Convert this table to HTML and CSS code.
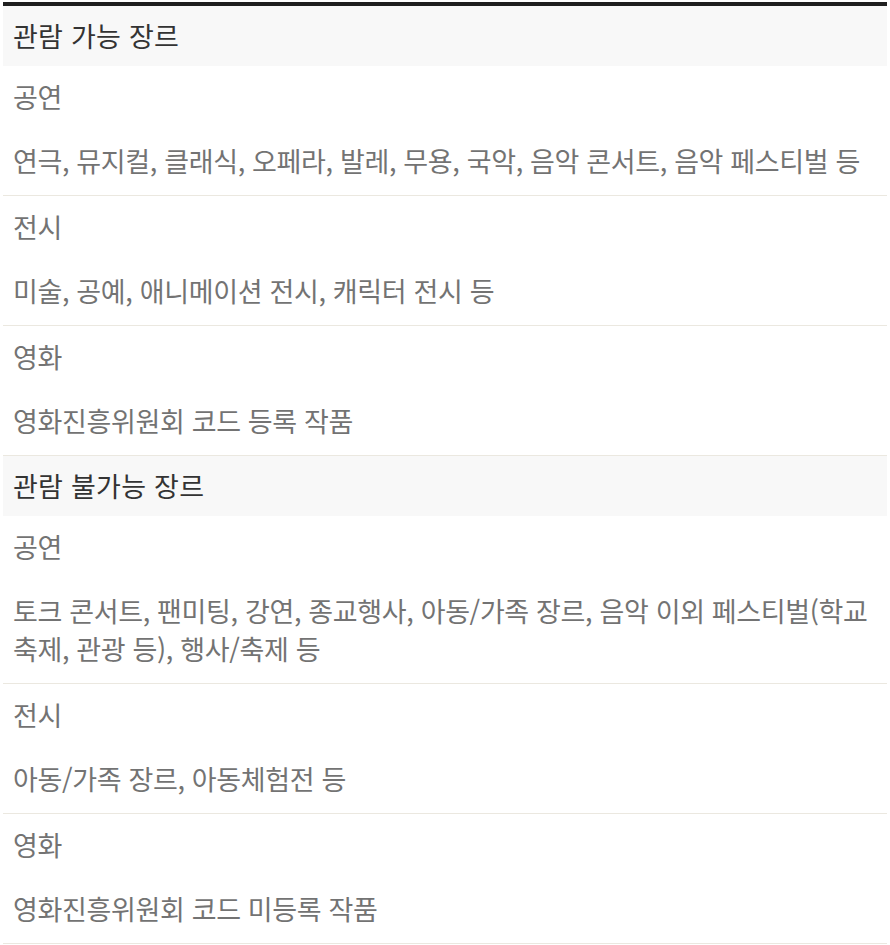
FILE: index.html
```html
<!DOCTYPE html>
<html lang="ko">
<head>
<meta charset="utf-8">
<title>관람 장르</title>
<link rel="stylesheet" href="styles.css">
</head>
<body>
<div class="genre">
  <section class="group">
    <h3 class="group-title">관람 가능 장르</h3>
    <div class="item">
      <p class="item-title">공연</p>
      <p class="item-desc">연극, 뮤지컬, 클래식, 오페라, 발레, 무용, 국악, 음악 콘서트, 음악 페스티벌 등</p>
    </div>
    <div class="item">
      <p class="item-title">전시</p>
      <p class="item-desc">미술, 공예, 애니메이션 전시, 캐릭터 전시 등</p>
    </div>
    <div class="item">
      <p class="item-title">영화</p>
      <p class="item-desc">영화진흥위원회 코드 등록 작품</p>
    </div>
  </section>
  <section class="group">
    <h3 class="group-title">관람 불가능 장르</h3>
    <div class="item">
      <p class="item-title">공연</p>
      <p class="item-desc">토크 콘서트, 팬미팅, 강연, 종교행사, 아동/가족 장르, 음악 이외 페스티벌(학교 축제, 관광 등), 행사/축제 등</p>
    </div>
    <div class="item">
      <p class="item-title">전시</p>
      <p class="item-desc">아동/가족 장르, 아동체험전 등</p>
    </div>
    <div class="item">
      <p class="item-title">영화</p>
      <p class="item-desc">영화진흥위원회 코드 미등록 작품</p>
    </div>
  </section>
</div>
</body>
</html>
```

FILE: styles.css
```css
html, body {
  margin: 0;
  padding: 0;
  background: #ffffff;
}

body {
  font-family: "Noto Sans CJK KR", "Noto Sans", sans-serif;
  font-size: 27px;
  letter-spacing: -0.35px;
  line-height: 38px;
  word-break: keep-all;
}

.genre {
  width: 884px;
  margin: 2px 3px 0;
  border-top: 4px solid #1f1f1f;
}

.group-title {
  margin: 0;
  padding: 11px 10px 11px;
  background: #f8f8f8;
  color: #333333;
  font-size: 27px;
  font-weight: 400;
  line-height: 38px;
  letter-spacing: 0.25px;
}

.item {
  padding: 12px 10px 15px;
  border-bottom: 1px solid #ebe8e0;
}

.item-title {
  margin: 0;
  color: #737373;
}

.item-desc {
  margin: 26px 0 0;
  color: #737373;
}
```
